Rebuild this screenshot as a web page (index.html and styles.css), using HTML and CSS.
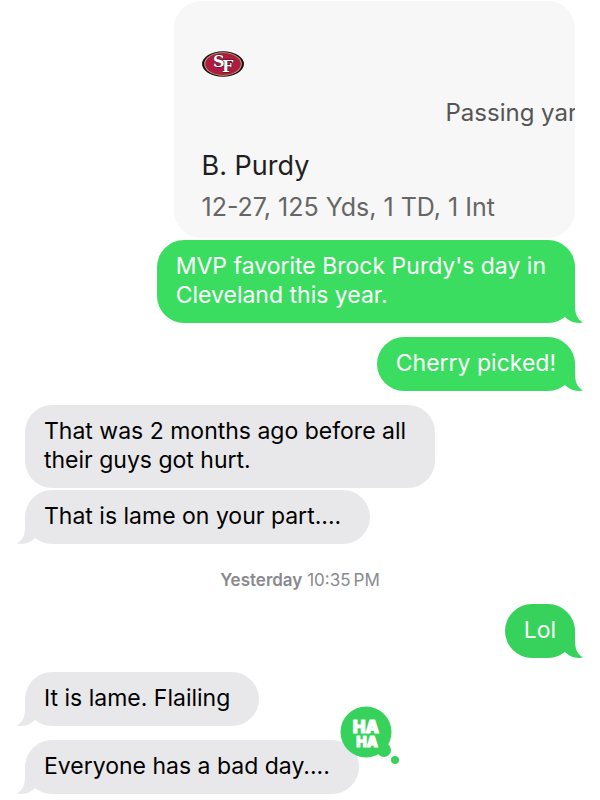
FILE: index.html
```html
<!DOCTYPE html>
<html lang="en">

<head>
    <meta charset="UTF-8">
    <meta name="viewport" content="width=device-width, initial-scale=1.0">
    <link rel="stylesheet" href="styles.css">
    <title>Messages</title>
</head>

<body>
    <!-- bubble tail, shared by all messages -->
    <svg class="symbols" aria-hidden="true">
        <symbol id="tail" viewBox="0 0 26 30">
            <path d="M18 0V12C18 21 20 26 26 29.5C18 31 12 28 8 24L0 15Z" />
        </symbol>
    </svg>

    <main class="chat">
        <article class="card">
            <svg class="logo" viewBox="0 0 42 26" role="img" aria-label="San Francisco 49ers">
                <ellipse cx="21" cy="13" rx="21" ry="12.7" fill="#15110f" />
                <ellipse cx="21" cy="13" rx="18.8" ry="11.7" fill="#c9a97a" />
                <ellipse cx="21" cy="13" rx="17.8" ry="11" fill="#b01c40" />
                <g class="logo-text">
                    <text x="20" y="21">F</text>
                    <text x="11" y="16">S</text>
                </g>
            </svg>
            <p class="stat">Passing yards</p>
            <h2 class="player">B. Purdy</h2>
            <p class="line">12-27, 125 Yds, 1 TD, 1 Int</p>
        </article>

        <div class="bubble sent wide">MVP favorite Brock Purdy's day in<br>Cleveland this year.
            <svg class="tail"><use href="#tail" /></svg>
        </div>

        <div class="bubble sent first">Cherry picked!
            <svg class="tail"><use href="#tail" /></svg>
        </div>

        <div class="bubble received wide first">That was 2 months ago before all<br>their guys got hurt.</div>

        <div class="bubble received wide">That is lame on your part....
            <svg class="tail"><use href="#tail" /></svg>
        </div>

        <time class="stamp"><b>Yesterday</b> 10:35&#8201;PM</time>

        <div class="bubble sent late">Lol
            <svg class="tail"><use href="#tail" /></svg>
        </div>

        <div class="bubble received wide first">It is lame. Flailing
            <svg class="tail"><use href="#tail" /></svg>
        </div>

        <div class="bubble received wide first">Everyone has a bad day....
            <svg class="tail"><use href="#tail" /></svg>
            <svg class="reaction" viewBox="0 0 60 60" role="img" aria-label="Ha ha">
                <circle cx="26" cy="26" r="25.5" />
                <circle cx="44" cy="44" r="7" />
                <circle cx="55" cy="54" r="4" />
                <text class="ha" x="26" y="27">HA</text>
                <text class="ha small" x="27" y="41">HA</text>
            </svg>
        </div>
    </main>
</body>

</html>
```

FILE: styles.css
```css
body {
    margin: 0;
    background: #fff;
    font-family: Inter, "Liberation Sans", sans-serif;
    font-size: 23px;
    line-height: 29px;
}

.symbols {
    display: none;
}

.chat {
    display: flex;
    flex-direction: column;
    align-items: flex-start;
    gap: 2px;
    padding: 1px 25px 6px;
}

/* shared link preview */
.card {
    box-sizing: border-box;
    align-self: flex-end;
    width: 73%;
    padding: 50px 0 16px 28px;
    border-radius: 27px;
    background: #f7f7f7;
    overflow: hidden;
}

.logo {
    display: block;
    width: 42px;
    height: 26px;
}

.logo-text {
    font-family: "DejaVu Serif", serif;
    font-size: 16px;
    font-weight: bold;
    fill: #fff;
    stroke: #3a1520;
    stroke-width: 1px;
    paint-order: stroke;
}

.stat,
.player,
.line {
    margin: 0;
    white-space: nowrap;
}

.stat {
    padding: 21px 0 0 244px;
    color: #555;
    font-size: 24px;
}

.player {
    padding-top: 22px;
    color: #1f1f1f;
    font-size: 27px;
    font-weight: 400;
    line-height: 34px;
}

.line {
    padding-top: 10px;
    color: #666;
    font-size: 25px;
}

/* messages */
.bubble {
    position: relative;
    box-sizing: border-box;
    max-width: 77%;
    padding: 12px 19px 13px;
    border-radius: 27px;
}

.wide {
    padding-right: 29px;
}

.sent {
    align-self: flex-end;
    background: #3add60;
    color: #fff;
    fill: #3add60;
}

.received {
    background: #e8e8ea;
    color: #000;
    fill: #e8e8ea;
}

.late {
    background: #37d25c;
    fill: #37d25c;
}

.first {
    margin-top: 12px;
}

.tail {
    position: absolute;
    bottom: 0;
    right: -8px;
    width: 26px;
    height: 30px;
}

.received .tail {
    right: auto;
    left: -8px;
    transform: scaleX(-1);
}

.stamp {
    align-self: center;
    padding: 24px 0 12px;
    color: #8a8a8e;
    font-size: 17px;
    line-height: 20px;
}

.stamp b {
    font-weight: 600;
}

/* tapback */
.reaction {
    position: absolute;
    top: -34px;
    right: -41px;
    width: 60px;
    height: 60px;
    fill: #37d25c;
}

.ha {
    font-size: 17px;
    font-weight: 900;
    text-anchor: middle;
    fill: #fff;
    stroke: #fff;
    stroke-width: 1px;
    stroke-linejoin: round;
}

.small {
    font-size: 14px;
}
```
